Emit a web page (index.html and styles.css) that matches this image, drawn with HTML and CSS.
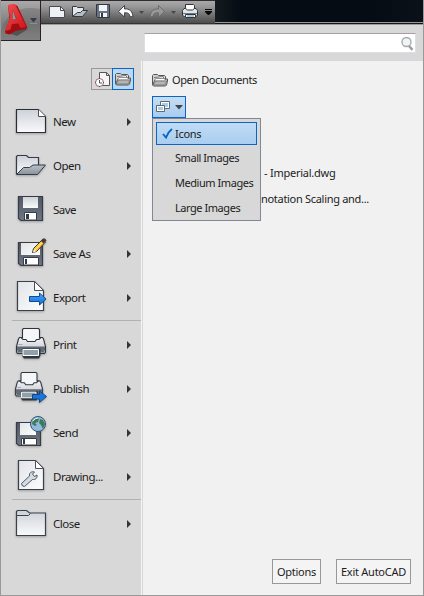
FILE: index.html
```html
<!DOCTYPE html>
<html lang="en">
<head>
<meta charset="utf-8">
<title>Application menu</title>
<link rel="stylesheet" href="styles.css">
</head>
<body>
<svg class="defs" width="0" height="0" aria-hidden="true">
  <defs>
    <linearGradient id="paper" x1="0" y1="0" x2="0" y2="1"><stop offset="0" stop-color="#cdd1d8"/><stop offset="1" stop-color="#fafafb"/></linearGradient>
    <linearGradient id="body" x1="0" y1="0" x2="0" y2="1"><stop offset="0" stop-color="#f2f3f5"/><stop offset="1" stop-color="#c0c4cb"/></linearGradient>
    <linearGradient id="sheet" x1="0" y1="0" x2="1" y2="1"><stop offset="0" stop-color="#e2e4e8"/><stop offset="1" stop-color="#fdfdfd"/></linearGradient>
    <linearGradient id="flap" x1="0" y1="0" x2="0" y2="1"><stop offset="0" stop-color="#b9c0c8"/><stop offset="1" stop-color="#89929d"/></linearGradient>
    <linearGradient id="steel" x1="0" y1="0" x2="0" y2="1"><stop offset="0" stop-color="#525763"/><stop offset="1" stop-color="#6f7785"/></linearGradient>
    <linearGradient id="blue" x1="0" y1="0" x2="0" y2="1"><stop offset="0" stop-color="#4ba5fa"/><stop offset="1" stop-color="#0b6fe0"/></linearGradient>
    <linearGradient id="red" x1="0" y1="0" x2="1" y2="1"><stop offset="0" stop-color="#f05050"/><stop offset="1" stop-color="#cf1018"/></linearGradient>
    <symbol id="folder" viewBox="0 0 16 14">
      <path d="M.5 11.5v-9l1-1h4l1 1h6l1 1v3M.5 12l3-6h12v2l-1 4-1 1h-12z" fill="#d2d2d0" stroke="#555"/>
      <path d="M2.500 4.500h10M3.500 6.500h9" stroke="#fff"/><path d="M2 4.500h1l8-1 1 2" fill="none" stroke="#777"/>
      <path d="M1 12 4 8h11l-2 4z" fill="#b5b5b3" stroke="#666" stroke-width=".7"/>
    </symbol>
    <symbol id="printer" viewBox="0 0 32 32">
      <path d="M4.500 9.500h23l1 1.500 2 7.500v5.500l-1 1.500h-27l-1-1.500v-5.500l2-7.500z" fill="url(#body)" stroke="#2f353f" stroke-width="1.100"/>
      <path d="M2 18.500h28v3l-1 3H3l-1-3z" fill="#626a76"/>
      <path d="M7.500 20.500h18v7l-1.500 3H9l-1.500-2z" fill="#30353b"/><path d="M8 21.500h15.500v6H8z" fill="#8fa1ab" stroke="#fff"/>
      <path d="M7.500 9.500v-8l1-1h15l1 1v8h1.500l-2 2h-2.500l-1.500 2h-7.500l-1.500-2H8l-2-2z" fill="#f5f6f7" stroke="#2f353f" stroke-width="1.100"/>
      <path d="M3.500 16.500h4" stroke="#a5a9b0"/>
    </symbol>
  </defs>
</svg>

<div class="window">
  <header class="titlebar">
    <div class="quickbar">
      <svg width="174" height="24" viewBox="41 0 174 24">
        <path d="M49.500 6.500h11l4 4v7h-15z" fill="#eef0f3" stroke="#fff"/>
        <path d="M49.500 6.500h11l4 4v7h-15zM60.500 6.500v4h4" fill="none" stroke="#31363e" stroke-width=".9"/>
        <path d="M72.500 16.500v-10h4l1 1h6v3" fill="#e3e7eb" stroke="#343a43"/>
        <path d="M72.500 16.500l5-4h3l2-2h5l-5 6z" fill="#b5bdc6" stroke="#343a43"/>
        <path d="M96.500 4.500h13v13h-12l-1-1z" fill="#687282" stroke="#323843"/>
        <path d="M99 5h8v6h-8zM100 13h7v4h-7z" fill="#f3f4f6"/><path d="M101 13h2v4h-2z" fill="#333b49"/>
        <path d="M118.500 11.500l6-6v3.500c5-.5 8 2 8.500 8l-3-.5c-.5-3-2-4-5.500-3.700v4.200z" fill="#fafafa" stroke="#343941" stroke-width=".9"/>
        <path d="M164.500 11.500l-6-6v3.500c-5-.5-8 2-8.500 8l3-.5c.5-3 2-4 5.500-3.700v4.200z" fill="#989898" stroke="#686868" stroke-width=".9"/>
        <path d="M139 11h5l-2.500 3zM171 11h5l-2.500 3z" fill="#484848"/>
        <path d="M184 8.500h12l1.500 2v5l-2 1h-11l-2-1v-5z" fill="#e2e4e6" stroke="#30353b"/>
        <path d="M185.500 8.500v-4h8l1 1v3l-2 1.500h-5zM185.500 14.500h10v3h-10z" fill="#fff" stroke="#30353b"/>
        <path d="M183 13.500h14" stroke="#717780"/><path d="M187 15h7v2h-7z" fill="#a8cde2"/>
        <path d="M205 9h7v1h-7zM205 11h7v1l-3 3h-1l-3-3z" fill="#080808"/>
      </svg>
    </div>
    <div class="backdrop"></div>
  </header>

  <div class="appbutton">
    <svg width="39" height="39" viewBox="1 1 39 39">
      <path d="M1 30C8 10 23 6 40 9V40H1z" fill="#555" opacity=".3"/>
      <path d="M5 32 17 36 28 29 21 27z" fill="#353535" opacity=".55"/>
      <path d="M8 6 14.500 4.500 17.500 6 27.500 27.500l-2 1.500-10 2-6 3.500-4-1L5 31l4.500-12z" fill="#a20d12"/>
      <path fill-rule="evenodd" d="M8 5.500 9 4.500l6-.5L26.500 27l-6 1-2-4.500-6.500.5-1.500 5.500-5.500 1.500L10 18zM13 10l-.500 9.500 4-.500z" fill="url(#red)"/>
      <path d="M13 10.500l3 8.500-3.500.500z" fill="#8f989b"/>
      <path d="M30 18h7l-3.500 4.500z" fill="#333d4d"/><path d="M30 23.500h7" stroke="#aaa" opacity=".5"/>
    </svg>
  </div>

  <div class="searchrow">
    <div class="search">
      <svg width="16" height="15" viewBox="0 0 16 15"><path d="M10 9l3.500 3.800" stroke="#9b9b9b" stroke-width="2.500"/><circle cx="7.500" cy="5" r="4.500" fill="#edf5f6" stroke="#a6a6a6" stroke-width="1.300"/></svg>
    </div>
  </div>

  <div class="main">
    <nav class="side">
      <div class="toggle">
        <span class="tab"><svg width="19" height="20" viewBox="92 69 19 20">
          <path d="M98.500 85.500v-13h7l3 3v10z" fill="#f5f5f5" stroke="#555"/><path d="M105.500 72.500v3h3" fill="none" stroke="#555"/>
          <circle cx="98.500" cy="82.500" r="4" fill="#fff" stroke="#777"/><path d="M98.500 80v3h2.500" fill="none" stroke="#555"/>
          <path d="M98 78h1v1h-1zM98 86h1v1h-1zM94 82h1v1h-1zM102 82h1v1h-1z" fill="#e11"/></svg></span>
        <span class="tab on"><svg width="16" height="14"><use href="#folder"/></svg></span>
      </div>
      <ul class="menu">
        <li class="item more"><svg class="ico" viewBox="0 0 32 32"><path d="M1.500 3.500h22l7 7v16h-29z" fill="url(#paper)" stroke="#2a2f37" stroke-width="1.200"/><path d="M23.500 3.500v7h7" fill="#fff" stroke="#4b515a"/></svg><span>New</span></li>
        <li class="item more"><svg class="ico" viewBox="0 0 32 32"><path d="M1.500 24V6.500l1-1h9l2 2h10v9" fill="url(#paper)" stroke="#353c46" stroke-width="1.200"/><path d="M1.500 24.500l7-7h6l3.500-2.500h12.500l-8 9.500z" fill="url(#flap)" stroke="#353c46"/></svg><span>Open</span></li>
        <li class="item"><svg class="ico" viewBox="0 0 32 32"><path d="M3.500 2.500h24v24H6l-2.500-2z" fill="url(#steel)" stroke="#363b45" stroke-width="1.200"/><path d="M8 3h15v11H8z" fill="url(#paper)"/><path d="M9.500 18.500h12V26h-12z" fill="#fff" stroke="#383e48"/><path d="M11 20h3v5h-3z" fill="#343a45"/></svg><span>Save</span></li>
        <li class="item more"><svg class="ico" viewBox="0 0 32 32"><path d="M3.500 4.500h24v23H6l-2.500-2z" fill="url(#steel)" stroke="#363b45" stroke-width="1.200"/><path d="M6 5h19v12H6z" fill="url(#sheet)"/><path d="M8.500 19.500h15V27h-15z" fill="#fff" stroke="#383e48"/><path d="M10 21h2v5h-2z" fill="#343a45"/><path d="M17.500 14.500l1-4 9-9 3 2.500-9 9.500z" fill="#ffc52d" stroke="#39332a"/><path d="M26 3l2-2.500h2l1.500 2-3 3z" fill="#4a3b35"/><path d="M18 14.500l1-3 2 2z" fill="#fff"/><path d="M20 12l6.500-7" stroke="#ffefa8"/></svg><span>Save As</span></li>
        <li class="item more"><svg class="ico" viewBox="0 0 32 32"><path d="M2.500-.500h17l9 9v20h-26z" fill="url(#sheet)" stroke="#3a404a" stroke-width="1.200"/><path d="M19.500-.500v9h9z" fill="#fff" stroke="#4b515a"/><path d="M14.500 14.500h10v-3.500l6.500 6-6.500 6v-3.500h-10z" fill="url(#blue)" stroke="#144a8c"/></svg><span>Export</span></li>
        <li class="rule"></li>
        <li class="item more"><svg class="ico" viewBox="0 0 32 32"><use href="#printer" y="-1" width="32" height="32"/></svg><span>Print</span></li>
        <li class="item more"><svg class="ico" viewBox="0 0 32 32"><use href="#printer" x="-1" y="-1" width="30" height="30"/><path d="M17.500 21.500h7v-3.500l7 5.500-7 6v-3.500h-7z" fill="#1678df" stroke="#134680"/></svg><span>Publish</span></li>
        <li class="item more"><svg class="ico" viewBox="0 0 32 32"><path d="M1.500 5.500h24v23H4l-2.500-2z" fill="url(#steel)" stroke="#363b45" stroke-width="1.200"/><path d="M5 6h16v12H5z" fill="url(#sheet)"/><path d="M6.500 21.500h15V28h-15z" fill="#fff" stroke="#383e48"/><path d="M8 22h2v5H8z" fill="#343a45"/><circle cx="23" cy="7" r="7.500" fill="#8fbcdc" stroke="#39536b"/><path d="M18 3l4-2 2 1-1 3-3 1 2 2-2 1-3-2zM25 2l3 1 2 4-2 5-2-4-2-2z" fill="#3d7a5a"/><path d="M18 4q2-3 5-3" fill="none" stroke="#e5f3fb"/></svg><span>Send</span></li>
        <li class="item more"><svg class="ico" viewBox="0 0 32 32"><path d="M3.500-.500h17l8 8v21h-25z" fill="url(#sheet)" stroke="#3a404a" stroke-width="1.200"/><path d="M20.500-.500v8h8z" fill="#fff" stroke="#4b515a"/><path d="M6.500 22.500l8-7.500c-.500-3 2-5 5-4l-2 2 2 2.500 2.500-1.500c.500 3-1.500 5-4.500 4.500l-8 7q-3 0-3-3z" fill="#d3dbe3" stroke="#3e4753" stroke-width=".9"/></svg><span>Drawing...</span></li>
        <li class="rule"></li>
        <li class="item more"><svg class="ico" viewBox="0 0 32 32"><path d="M1.500 27.500V3.500l1-1h9l3 2.500h16v22.500z" fill="url(#paper)" stroke="#3a424d" stroke-width="1.200"/><path d="M2 7.500h11.500l2-2" fill="none" stroke="#3a424d"/></svg><span>Close</span></li>
      </ul>
    </nav>

    <section class="content">
      <h1 class="heading"><svg width="16" height="14"><use href="#folder"/></svg><span>Open Documents</span></h1>
      <div class="viewpicker">
        <button class="viewbutton" type="button" aria-label="View">
          <svg width="32" height="20" viewBox="153 97 32 20"><path d="M160.500 101.500h9v7h-9z" fill="#fff" stroke="#666"/><path d="M162 103h6v4h-6z" fill="#9ed0f3"/><path d="M156.500 105.500h8v6h-8z" fill="#fff" stroke="#666"/><path d="M158 107h5v3h-5z" fill="#9ed0f3"/><path d="M175 105h8l-4 4.500z" fill="#444"/></svg>
        </button>
        <ul class="dropdown">
          <li class="option chosen"><svg width="11" height="11" viewBox="0 0 11 11"><path d="M1 6l3 3.500Q6 4 10 1" fill="none" stroke="#0964c8" stroke-width="1.900"/></svg>Icons</li>
          <li class="option">Small Images</li>
          <li class="option">Medium Images</li>
          <li class="option">Large Images</li>
        </ul>
      </div>
      <ul class="files">
        <li class="file imperial">- Imperial.dwg</li>
        <li class="file annotation">notation Scaling and...</li>
      </ul>
      <footer class="actions">
        <button class="action options" type="button">Options</button>
        <button class="action exit" type="button">Exit AutoCAD</button>
      </footer>
    </section>
  </div>
</div>
</body>
</html>
```
FILE: styles.css
```css
* { box-sizing: border-box; }
body { margin: 0; font: 11px/16px "Noto Sans", "Open Sans", sans-serif; letter-spacing: -.25px; color: #1c1c1c; }
ul { list-style: none; margin: 0; padding: 0; }
svg { display: block; flex: none; }
.defs { position: absolute; }
button { font: inherit; letter-spacing: inherit; color: inherit; padding: 0; }
.window { position: relative; width: 424px; height: 596px; overflow: hidden; display: flex; flex-direction: column; background: #d8d8d8; border: solid #999; border-width: 0 1px 1px; }
.titlebar { height: 25px; flex: none; display: flex; margin: 0 -1px; padding-left: 41px; background: #9c9c9c; }
.quickbar { width: 174px; height: 24px; background: linear-gradient(#a9a9a9, #999 25%, #505050 96%); border-top: 1px solid #312c2f; border-bottom: 1px solid #333; }
.quickbar svg { margin-top: -1px; }
.backdrop { flex: 1; height: 24px; background: linear-gradient(90deg, #131b20, #050c13 12%, #050c13 75%, #0a1118); border-bottom: 1px solid #151515; box-shadow: inset 0 -1px #999; }
.appbutton { position: absolute; left: -1px; top: 0; width: 41px; height: 41px; border: 1px solid #292125; background: linear-gradient(#aaa, #7d7d7d 60%, #939393); }
.searchrow { height: 36px; flex: none; padding: 8px 7px 0 143px; }
.search { height: 20px; display: flex; justify-content: flex-end; padding-top: 3px; background: #fff; border: 1px solid #d9e0e8; border-top-color: #a2a2a6; }
.main { flex: 1; display: flex; min-height: 0; }
.side { width: 140px; padding: 7px 0 0 11px; }
.toggle { display: flex; margin-left: 79px; }
.tab { width: 22px; height: 22px; border: 1px solid #989898; border-right: 0; display: flex; align-items: center; justify-content: center; }
.tab:first-child { width: 21px; }
.tab.on { border: 1px solid #0965c8; background: #b9d9f6; }
.menu { margin-top: 10px; }
.item { height: 44px; display: flex; align-items: center; padding-left: 3px; font-size: 11.500px; letter-spacing: -.5px; }
.item span { margin-left: 6px; width: 70px; white-space: nowrap; }
.ico { width: 32px; height: 32px; overflow: visible; filter: drop-shadow(0 1px 1px #0004); }
.more::after { content: ""; margin-left: 4px; border: solid transparent; border-width: 4px 0 4px 4px; border-left-color: #333; }
.rule { height: 1px; margin: 0 0 2px; background: #b1b1b1; }
.content { flex: 1; display: flex; flex-direction: column; border-left: 1px solid #d8d8d8; margin-left: 1px; background: #f1f1f1; box-shadow: -1px 0 #f4f4f4; padding: 11px 12px 0 9px; }
.heading { margin: 0; height: 16px; display: flex; align-items: center; gap: 4px; font-size: 11px; font-weight: 400; letter-spacing: -.4px; }
.viewpicker { position: relative; margin-top: 8px; }
.viewbutton { width: 34px; height: 22px; border: 1px solid #0965c8; background: linear-gradient(#c5def5, #a9ccef); display: block; }
.dropdown { position: absolute; left: 0; top: 22px; width: 109px; height: 103px; padding: 3px; border: 1px solid #828793; background: #d8d8d8; letter-spacing: -.45px; }
.option { height: 25px; display: flex; align-items: center; padding-left: 19px; white-space: nowrap; }
.chosen { height: 23px; border: 1px solid #0965c8; background: linear-gradient(#c1dbf5, #a9ceef); padding-left: 5px; gap: 2px; letter-spacing: -.3px; }
.files { padding: 46px 0 0 109px; letter-spacing: -.3px; }
.file { height: 26px; line-height: 18px; white-space: nowrap; }
.imperial { padding-left: 3px; letter-spacing: -.25px; }
.actions { margin-top: auto; margin-bottom: 11px; display: flex; justify-content: flex-end; gap: 15px; }
.action { height: 25px; border: 1px solid #989898; background: #f4f4f4; }
.options { width: 49px; }
.exit { width: 75px; }
```
